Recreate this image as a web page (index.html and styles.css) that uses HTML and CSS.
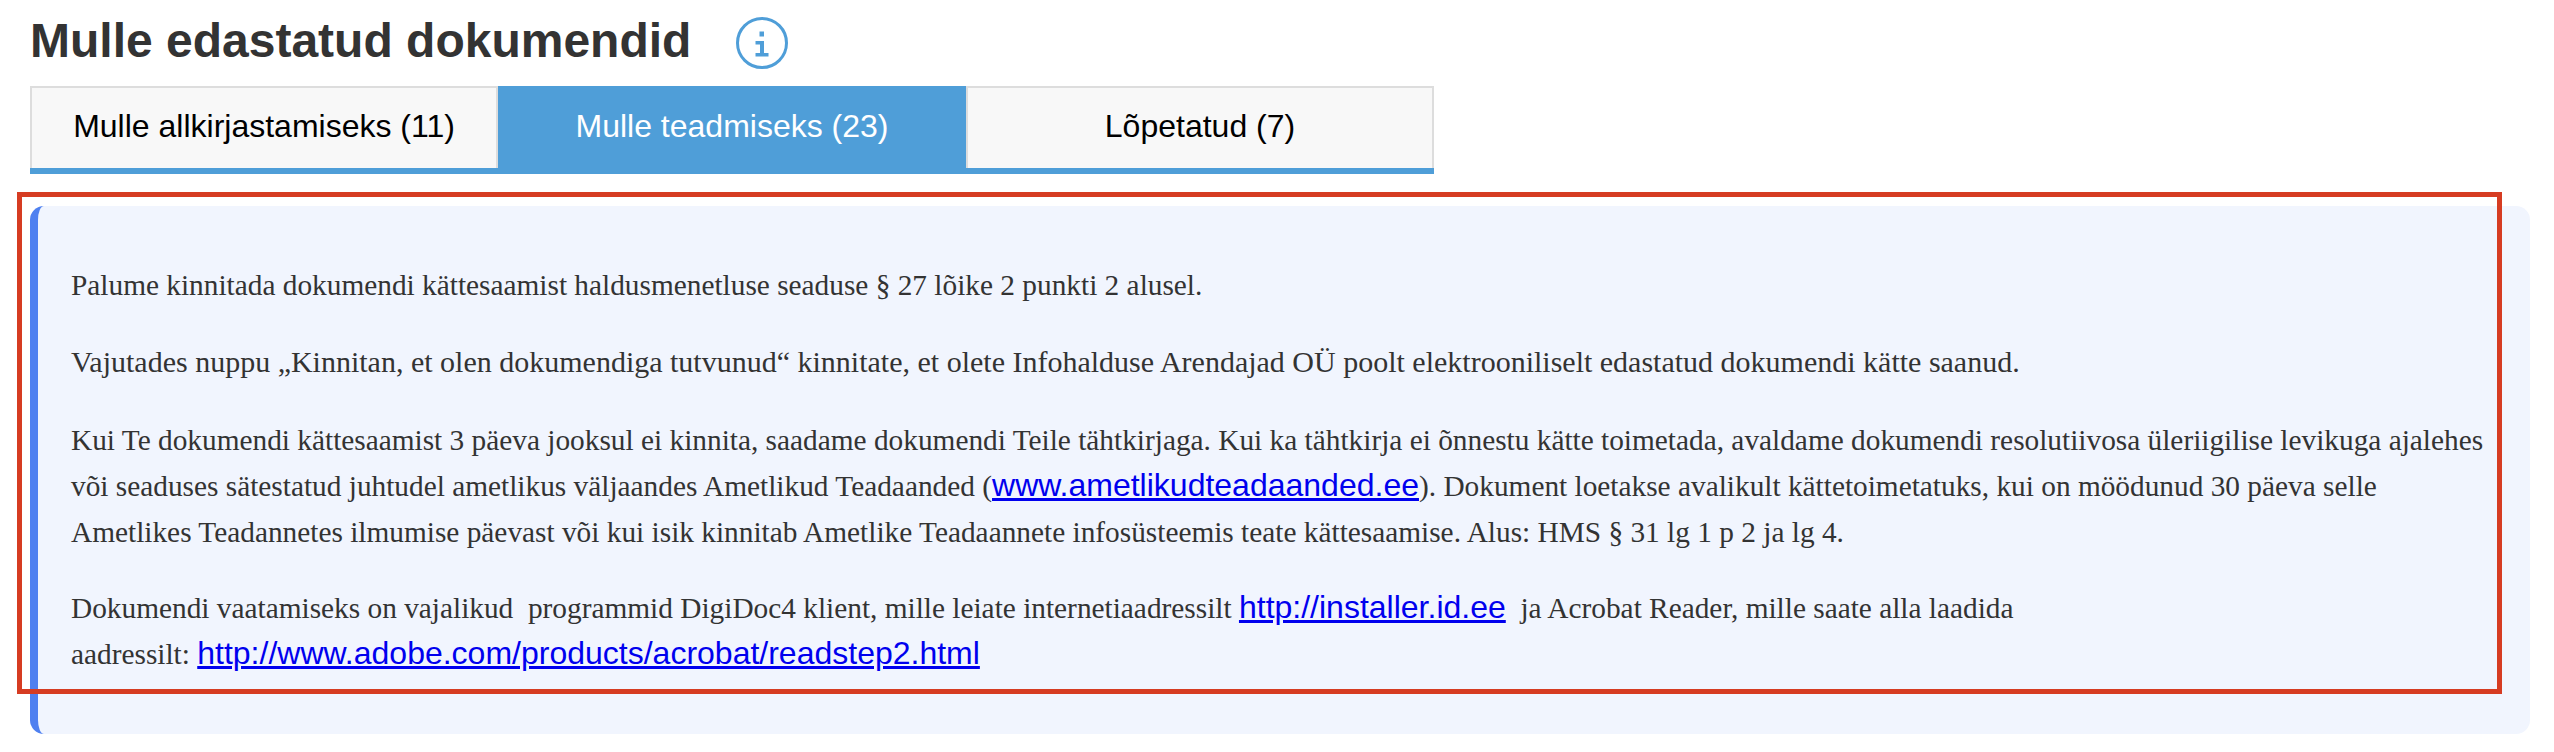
FILE: index.html
```html
<!DOCTYPE html>
<html lang="et">
<head>
    <meta charset="UTF-8">
    <meta name="viewport" content="width=device-width, initial-scale=1.0">
    <title>Mulle edastatud dokumendid</title>
    <link rel="stylesheet" href="styles.css">
</head>
<body>
    <div class="page-head">
        <h1>Mulle edastatud dokumendid</h1>
        <svg class="info-icon" viewBox="0 0 52 52" width="52" height="52" aria-hidden="true">
            <circle cx="26" cy="26" r="24.500" fill="none" stroke="#4f9ed8" stroke-width="3"></circle>
            <rect x="23.500" y="14.500" width="4.500" height="5" fill="#4f9ed8"></rect>
            <path d="M19.500 24h8.500v12h4.500v3.500h-13v-3.500h4.500v-8.500h-4.500z" fill="#4f9ed8"></path>
        </svg>
    </div>

    <div class="tabs">
        <div class="tab">Mulle allkirjastamiseks (11)</div>
        <div class="tab active">Mulle teadmiseks (23)</div>
        <div class="tab">Lõpetatud (7)</div>
    </div>

    <div class="notice">
        <p>Palume kinnitada dokumendi kättesaamist haldusmenetluse seaduse § 27 lõike 2 punkti 2 alusel.</p>
        <p class="larger">Vajutades nuppu „Kinnitan, et olen dokumendiga tutvunud“ kinnitate, et olete Infohalduse Arendajad OÜ poolt elektrooniliselt edastatud dokumendi kätte saanud.</p>
        <p>Kui Te dokumendi kättesaamist 3 päeva jooksul ei kinnita, saadame dokumendi Teile tähtkirjaga. Kui ka tähtkirja ei õnnestu kätte toimetada, avaldame dokumendi resolutiivosa üleriigilise levikuga ajalehes või seaduses sätestatud juhtudel ametlikus väljaandes Ametlikud Teadaanded (<a href="#">www.ametlikudteadaanded.ee</a>). Dokument loetakse avalikult kättetoimetatuks, kui on möödunud 30 päeva selle Ametlikes Teadannetes ilmumise päevast või kui isik kinnitab Ametlike Teadaannete infosüsteemis teate kättesaamise. Alus: HMS § 31 lg 1 p 2 ja lg 4.</p>
        <p>Dokumendi vaatamiseks on vajalikud&nbsp; programmid DigiDoc4 klient, mille leiate internetiaadressilt <a href="#">http://installer.id.ee</a>&nbsp; ja Acrobat Reader, mille saate alla laadida aadressilt:&nbsp;<a href="#">http://www.adobe.com/products/acrobat/readstep2.html</a></p>
    </div>

    <!-- punane märgistus -->
    <div class="highlight"></div>
</body>
</html>
```

FILE: styles.css
```css
body {
    margin: 0;
    padding: 14px 24px 18px 30px;
    font-family: "Liberation Sans", Arial, sans-serif;
    background-color: #fff;
    position: relative;
}

.page-head {
    display: flex;
    align-items: center;
    height: 54px;
    margin-bottom: 18px;
}

.page-head h1 {
    margin: 0;
    font-size: 48px;
    line-height: 54px;
    font-weight: bold;
    color: #333;
}

.info-icon {
    margin: 4px 0 0 45px;
}

.tabs {
    display: flex;
    width: 1404px;
    border-bottom: 6px solid #4f9ed8;
    margin-bottom: 32px;
}

.tab {
    flex: 1;
    box-sizing: border-box;
    height: 82px;
    line-height: 76px;
    text-align: center;
    font-size: 32px;
    color: #000;
    background-color: #f8f8f8;
    border: 2px solid #ddd;
    border-bottom: none;
}

.tab.active {
    background-color: #4f9ed8;
    border-color: #4f9ed8;
    color: #fff;
}

.notice {
    padding: 26px 40px 27px 33px;
    background-color: #f1f5fe;
    border-left: 8px solid #4f80f0;
    border-radius: 14px;
    font-family: "Liberation Serif", "Times New Roman", serif;
    font-size: 29.33px;
    line-height: 46px;
    color: #333;
}

.notice p {
    margin: 30px 0;
}

.notice p.larger {
    margin: 31px 0 32px;
    font-size: 30px;
}

.notice a {
    font-family: "Liberation Sans", Arial, sans-serif;
    font-size: 32px;
    line-height: 1;
    color: #00e;
}

.highlight {
    position: absolute;
    left: 17px;
    top: 192px;
    width: 2485px;
    height: 502px;
    box-sizing: border-box;
    border: 5px solid #d63c22;
}
```
